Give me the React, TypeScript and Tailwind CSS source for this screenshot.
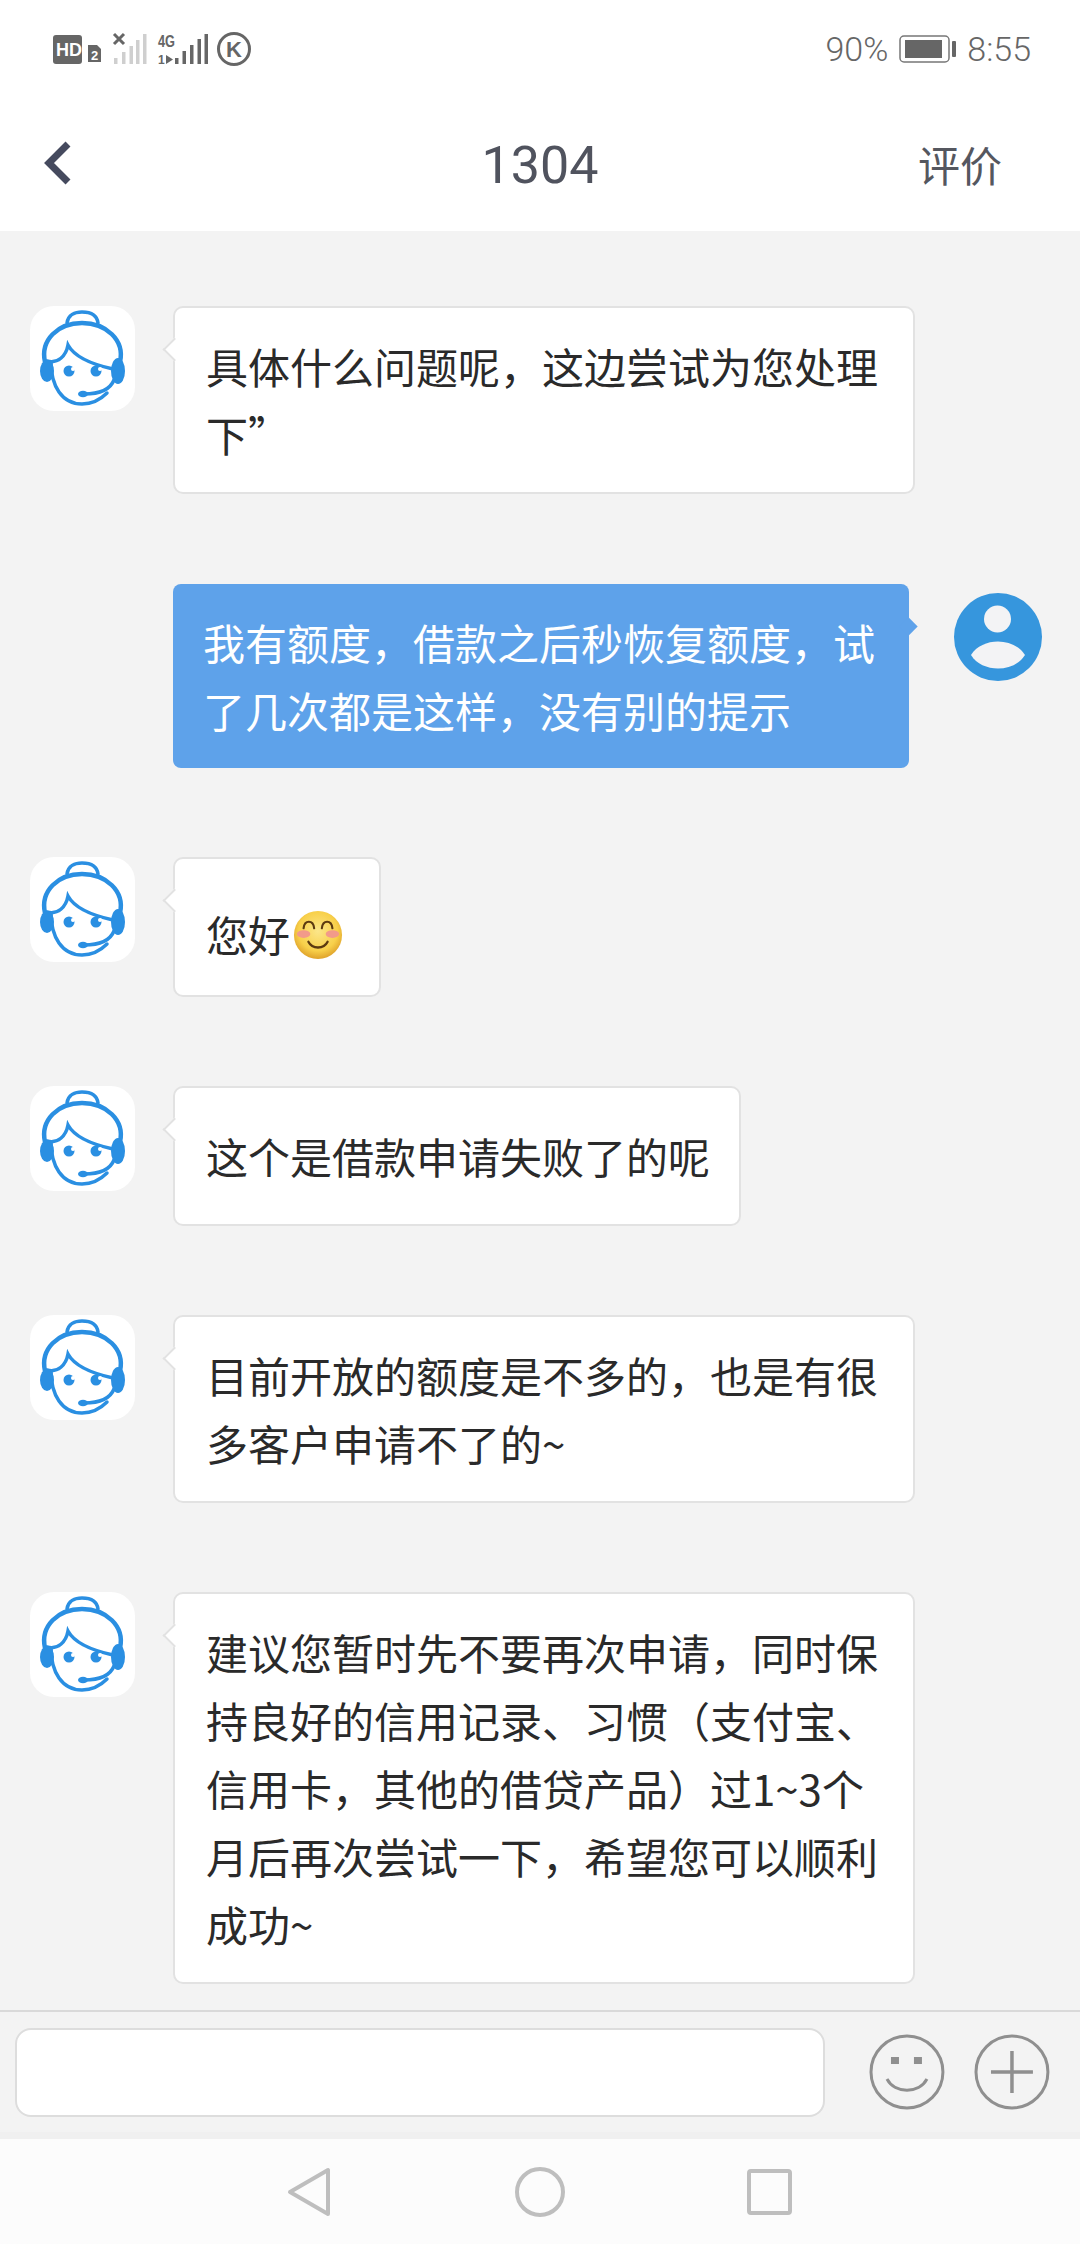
import React from 'react';

const cjk = { fontFamily: '"Noto Sans CJK SC", sans-serif' };

function AgentAvatar() {
  return (
    <div className="w-[105px] h-[105px] shrink-0 rounded-[24px] bg-white">
      <svg viewBox="0 0 105 105" className="w-full h-full" fill="none" stroke="#2a8fe2" strokeWidth="3.500" strokeLinecap="round">
        <path d="M37 17 C38 9 45 6 52 6 C60 6 67 9 68 17" />
        <path d="M15 56 C10 34 28 17 52 17 C76 17 95 34 90 56" strokeWidth="4.500" />
        <path d="M21 56 C21 80 32 98 52 98 C62 98 70 94 77 87" />
        <path d="M17 55 C28 58 36 50 38 39 C44 50 60 58 83 63" />
        <circle cx="39" cy="65" r="5.500" fill="#2a8fe2" stroke="none" />
        <circle cx="66" cy="65" r="5.500" fill="#2a8fe2" stroke="none" />
        <circle cx="43" cy="63" r="2" fill="#fff" stroke="none" />
        <circle cx="70" cy="63" r="2" fill="#fff" stroke="none" />
        <ellipse cx="17" cy="65" rx="7" ry="11" fill="#2a8fe2" stroke="none" />
        <ellipse cx="88" cy="65" rx="7" ry="13" fill="#2a8fe2" stroke="none" />
        <path d="M84 74 C80 84 68 88 54 88" />
        <ellipse cx="53" cy="88" rx="5" ry="3.200" fill="#2a8fe2" stroke="none" />
      </svg>
    </div>
  );
}

function UserAvatar() {
  return (
    <svg viewBox="0 0 88 88" className="w-[88px] h-[88px] shrink-0">
      <circle cx="44" cy="44" r="44" fill="#3696dd" />
      <circle cx="43.500" cy="26" r="13.500" fill="#f3f3f5" />
      <path d="M17 62 C28 44 60 44 71 62 C60 80 28 80 17 62 Z" fill="#f3f3f5" />
    </svg>
  );
}

function Emoji() {
  return (
    <svg viewBox="0 0 52 52" className="relative top-[-6px] ml-[3px] inline-block w-[50px] h-[50px] align-middle">
      <defs>
        <radialGradient id="face" cx="50%" cy="42%" r="58%">
          <stop offset="0%" stopColor="#fbe68a" />
          <stop offset="70%" stopColor="#f8d04a" />
          <stop offset="100%" stopColor="#dfa22a" />
        </radialGradient>
      </defs>
      <circle cx="26" cy="26" r="25" fill="url(#face)" />
      <ellipse cx="11" cy="25" rx="7" ry="4" fill="#f29a8a" />
      <ellipse cx="41" cy="25" rx="7" ry="4" fill="#f29a8a" />
      <path d="M11 19 C12 10 21 10 22 19 M30 19 C31 10 40 10 41 19" fill="none" stroke="#5c3a10" strokeWidth="2.200" strokeLinecap="round" />
      <path d="M16 33 C20 41 32 41 36 33" fill="none" stroke="#5c3a10" strokeWidth="2.400" strokeLinecap="round" />
    </svg>
  );
}

function Left({ children, width, mt }: { children: React.ReactNode; width: string; mt: string }) {
  return (
    <div className={`flex items-start pl-[30px] ${mt}`}>
      <AgentAvatar />
      <div className={`relative ml-[38px] ${width} min-h-[140px] flex items-center bg-white border-2 border-[#e2e2e2] rounded-[10px] pl-[31px] pr-[20px] py-[24px] text-[42px] leading-[68px] text-[#2a2a2a]`}>
        <span className="absolute left-[-9px] top-[33px] w-[17px] h-[17px] bg-white rotate-45 border-l-2 border-b-2 border-[#e2e2e2]" />
        <div>{children}</div>
      </div>
    </div>
  );
}

export default function App() {
  return (
    <div className="w-[1080px] h-[2244px] flex flex-col overflow-hidden bg-[#f3f3f3]" style={cjk}>
      {/* status bar */}
      <div className="h-[95px] bg-white flex items-center justify-between pl-[53px] pr-[49px] pt-[3px] text-[#666666]">
        <svg width="200" height="36" viewBox="0 0 200 36">
          <rect x="0" y="4" width="29" height="29" rx="3" fill="#666" />
          <text x="3" y="25" fontSize="18" fontWeight="700" fill="#fff" fontFamily="Liberation Sans">HD</text>
          <path d="M35 14 h9 l4 4 v13 h-13 z" fill="#666" />
          <text x="38" y="29" fontSize="13" fontWeight="700" fill="#fff" fontFamily="Liberation Sans">2</text>
          <path d="M61 3 l10 10 M71 3 l-10 10" stroke="#666" strokeWidth="3" />
          <g fill="#cfcfcf">
            <rect x="61" y="27" width="3.500" height="6" />
            <rect x="69" y="21" width="3.500" height="12" />
            <rect x="76.500" y="15" width="3.500" height="18" />
            <rect x="83" y="9" width="3.500" height="24" />
            <rect x="90" y="3" width="3.500" height="30" />
          </g>
          <text x="105" y="16" fontSize="16" fontWeight="700" fill="#666" fontFamily="Liberation Sans" textLength="17" lengthAdjust="spacingAndGlyphs">4G</text>
          <text x="105" y="33" fontSize="12" fontWeight="700" fill="#666" fontFamily="Liberation Sans">1</text>
          <path d="M113 24 l7 4.500 l-7 4.500 z" fill="#666" />
          <g fill="#666">
            <rect x="122" y="27" width="3.500" height="6" />
            <rect x="129.500" y="20" width="3.500" height="13" />
            <rect x="137" y="14" width="3.500" height="19" />
            <rect x="144.500" y="8" width="3.500" height="25" />
            <rect x="151.500" y="3" width="3.500" height="30" />
          </g>
          <circle cx="181" cy="18" r="15.500" fill="none" stroke="#666" strokeWidth="3" />
          <text x="173" y="26" fontSize="22" fontWeight="700" fill="#666" fontFamily="Liberation Sans">K</text>
        </svg>
        <div className="flex items-center text-[34px] leading-none" style={{ fontFamily: '"Roboto", sans-serif' }}>
          <span className="mr-[11px] font-light">90%</span>
          <svg width="58" height="28" viewBox="0 0 58 28">
            <rect x="1" y="1" width="49" height="26" rx="4" fill="none" stroke="#777" strokeWidth="1.500" />
            <rect x="6" y="5" width="37" height="18" fill="#666" />
            <rect x="53" y="6" width="4" height="16" rx="1" fill="#666" />
          </svg>
          <span className="ml-[10px] font-light">8:55</span>
        </div>
      </div>

      {/* header */}
      <div className="h-[136px] bg-white flex items-center justify-between pl-[43px] pr-[78px] relative">
        <svg width="30" height="46" viewBox="0 0 30 46">
          <path d="M25 4 L6 23 L25 42" fill="none" stroke="#454a5e" strokeWidth="7" />
        </svg>
        <span className="absolute left-0 right-0 pt-[5px] text-center text-[52px] text-[#50535e]" style={{ fontFamily: '"Roboto", sans-serif' }}>1304</span>
        <span className="text-[42px] text-[#55575f]">评价</span>
      </div>

      {/* chat */}
      <div className="flex-1 overflow-hidden pt-[75px]">
        <Left width="w-[742px]" mt="">
          具体什么问题呢，这边尝试为您处理下”
        </Left>

        <div className="flex items-start pl-[173px] mt-[90px]">
          <div className="relative w-[736px] bg-[#5ea2ea] rounded-[8px] pl-[30px] pr-[20px] py-[24px] text-[42px] leading-[68px] text-white">
            <span className="absolute right-[-6px] top-[36px] w-[13px] h-[13px] bg-[#5ea2ea] rotate-45" />
            我有额度，借款之后秒恢复额度，试了几次都是这样，没有别的提示
          </div>
          <div className="ml-[45px] mt-[9px]">
            <UserAvatar />
          </div>
        </div>

        <Left width="w-[208px]" mt="mt-[89px]">
          <div className="whitespace-nowrap pt-[14px]">您好<Emoji /></div>
        </Left>
        <Left width="w-[568px]" mt="mt-[89px]">
          <span className="whitespace-nowrap">这个是借款申请失败了的呢</span>
        </Left>
        <Left width="w-[742px]" mt="mt-[89px]">
          目前开放的额度是不多的，也是有很多客户申请不了的~
        </Left>
        <Left width="w-[742px]" mt="mt-[89px]">
          建议您暂时先不要再次申请，同时保持良好的信用记录、习惯（支付宝、信用卡，其他的借贷产品）过1~3个月后再次尝试一下，希望您可以顺利成功~
        </Left>
      </div>

      {/* input bar */}
      <div className="h-[129px] border-t-2 border-[#d9d9d9] bg-[#f3f3f3] flex items-center pl-[15px] pr-[30px] pb-[7px] shadow-[inset_0_-7px_0_#f0f0f0]">
        <div className="w-[811px] h-[89px] bg-white border-2 border-[#dddddd] rounded-[16px]" />
        <svg width="76" height="76" viewBox="0 0 76 76" className="ml-[44px]">
          <circle cx="38" cy="38" r="36" fill="none" stroke="#8f8f8f" strokeWidth="3" />
          <rect x="22" y="23" width="8" height="7" fill="#8f8f8f" />
          <rect x="45" y="23" width="8" height="7" fill="#8f8f8f" />
          <path d="M18 45 C26 60 50 60 58 45" fill="none" stroke="#8f8f8f" strokeWidth="3" />
        </svg>
        <svg width="76" height="76" viewBox="0 0 76 76" className="ml-[29px]">
          <circle cx="38" cy="38" r="36" fill="none" stroke="#8f8f8f" strokeWidth="3" />
          <path d="M38 17 V59 M17 38 H59" stroke="#8f8f8f" strokeWidth="3.500" />
        </svg>
      </div>

      {/* nav bar */}
      <div className="h-[105px] bg-[#fcfcfc] flex items-center pl-[287px]">
        <svg width="44" height="50" viewBox="0 0 44 50">
          <path d="M41 3 V47 L3 25 Z" fill="none" stroke="#bebebe" strokeWidth="4" strokeLinejoin="round" />
        </svg>
        <svg width="50" height="50" viewBox="0 0 50 50" className="ml-[184px]">
          <circle cx="25" cy="25" r="23" fill="none" stroke="#bebebe" strokeWidth="4" />
        </svg>
        <svg width="45" height="46" viewBox="0 0 45 46" className="ml-[182px]">
          <rect x="2" y="2" width="41" height="42" rx="2" fill="none" stroke="#bebebe" strokeWidth="4" />
        </svg>
      </div>
    </div>
  );
}
